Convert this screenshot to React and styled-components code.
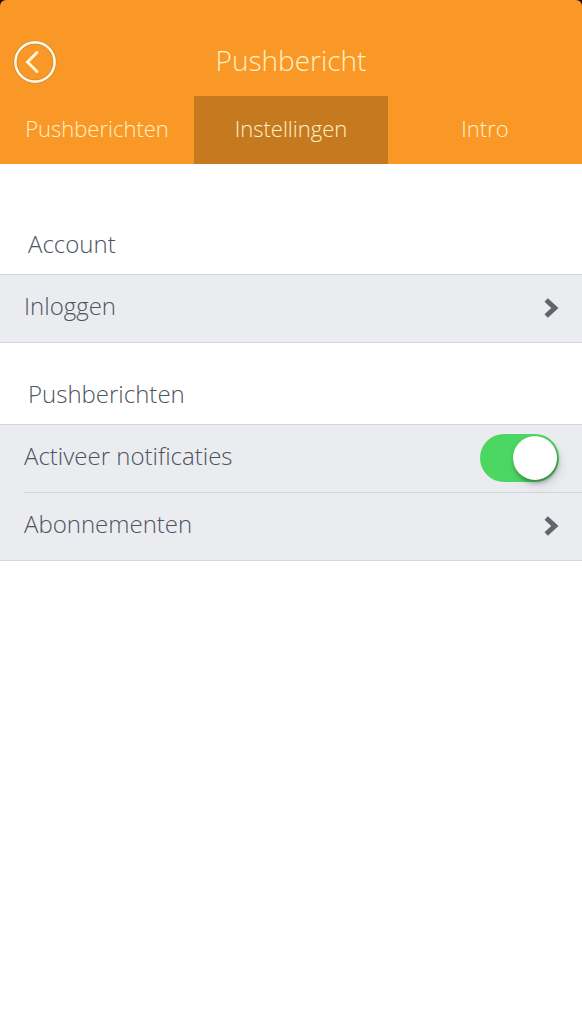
import React, { useState } from "react";
import styled, { createGlobalStyle } from "styled-components";

const GlobalStyle = createGlobalStyle`
  body {
    margin: 0;
    background: #fff;
    font-family: "Open Sans", "Noto Sans", sans-serif;
    font-weight: 330;
    font-variant-ligatures: none;
    color: #4d535f;
  }

  * {
    box-sizing: border-box;
  }
`;

const HeaderBackdrop = styled.div`
  background: #2a0800;
`;

const Header = styled.header`
  overflow: hidden;
  border-radius: 6px 6px 0 0;
  background: #fa9827;
  color: #fff0c8;
`;

const TitleBar = styled.div`
  display: grid;
  grid-template-columns: 44px 1fr 44px;
  align-items: center;
  height: 96px;
  padding: 28px 13px 0;
`;

const Title = styled.h1`
  margin: 0;
  padding-bottom: 4px;
  font-size: 28px;
  line-height: 36px;
  font-weight: inherit;
  text-align: center;
`;

const BackButton = styled.button`
  display: flex;
  width: 44px;
  height: 44px;
  padding: 0;
  border: 0;
  background: transparent;
`;

const Tabs = styled.nav`
  display: grid;
  grid-template-columns: repeat(3, 1fr);
`;

const Tab = styled.a`
  height: 68px;
  padding-top: 16px;
  background: ${(props) => (props.$active ? "#c67a1f" : "transparent")};
  color: #fff0c8;
  font-size: 22px;
  line-height: 32px;
  text-align: center;
  text-decoration: none;
`;

const Content = styled.main`
  padding-top: 29px;
`;

const SectionTitle = styled.h2`
  height: 81px;
  margin: 0;
  padding: 35px 28px 0;
  font-size: 24px;
  line-height: 32px;
  font-weight: inherit;
`;

const List = styled.div`
  border-top: 1px solid #d4d6da;
  border-bottom: 1px solid #d4d6da;
  background: #ebecf0;
`;

const rowStyles = `
  display: flex;
  align-items: center;
  justify-content: space-between;
  height: 67px;
  padding: 0 23px 2px 0;
  margin-left: 24px;
  color: inherit;
  font-size: 24px;
  line-height: 32px;
  text-decoration: none;
`;

const LinkRow = styled.a`
  ${rowStyles}
  ${(props) => props.$divided && "height: 68px; border-top: 1px solid #d4d6da;"}
`;

const SwitchRow = styled.label`
  ${rowStyles}
`;

const RowText = styled.span`
  padding-bottom: 4px;
`;

const Switch = styled.input`
  appearance: none;
  display: flex;
  align-items: center;
  width: 79px;
  height: 48px;
  margin: 0;
  padding: 0 2px;
  border-radius: 24px;
  background: ${(props) => (props.checked ? "#4cd763" : "#d4d6da")};

  &::before {
    content: "";
    width: 44px;
    height: 44px;
    margin-left: ${(props) => (props.checked ? "auto" : "0")};
    border-radius: 50%;
    background: #fff;
    box-shadow: 1px 3px 4px rgba(0, 0, 0, 0.3), 3px 6px 12px rgba(0, 0, 0, 0.1);
  }
`;

const BackIcon = () => (
  <svg width="44" height="44" viewBox="0 0 44 44" fill="none">
    <circle cx="22" cy="22" r="19.6" stroke="#c98735" strokeWidth="4" />
    <circle cx="22" cy="22" r="19.6" stroke="#fff6dc" strokeWidth="2.6" />
    <path
      d="M24 12.5L14.5 22L24 31.5"
      stroke="#fff6dc"
      strokeWidth="3"
      strokeLinecap="round"
    />
  </svg>
);

const Chevron = () => (
  <svg width="15" height="20" viewBox="0 0 15 20" fill="none">
    <path d="M2.2 2L10.8 10L2.2 18" stroke="#62656b" strokeWidth="5" />
  </svg>
);

const tabs = [
  { id: "messages", name: "Pushberichten" },
  { id: "settings", name: "Instellingen" },
  { id: "intro", name: "Intro" },
];

const App = () => {
  const [activeTab, setActiveTab] = useState("settings");
  const [enabled, setEnabled] = useState(true);

  return (
    <>
      <GlobalStyle />
      <HeaderBackdrop>
        <Header>
          <TitleBar>
            <BackButton type="button" aria-label="Terug">
              <BackIcon />
            </BackButton>
            <Title>Pushbericht</Title>
          </TitleBar>
          <Tabs>
            {tabs.map((tab) => (
              <Tab
                key={tab.id}
                href={`#${tab.id}`}
                $active={tab.id === activeTab}
                onClick={() => setActiveTab(tab.id)}
              >
                {tab.name}
              </Tab>
            ))}
          </Tabs>
        </Header>
      </HeaderBackdrop>
      <Content>
        <SectionTitle>Account</SectionTitle>
        <List>
          <LinkRow href="#login">
            <RowText>Inloggen</RowText>
            <Chevron />
          </LinkRow>
        </List>
        <SectionTitle>Pushberichten</SectionTitle>
        <List>
          <SwitchRow>
            <RowText>Activeer notificaties</RowText>
            <Switch
              type="checkbox"
              checked={enabled}
              onChange={() => setEnabled(!enabled)}
            />
          </SwitchRow>
          <LinkRow href="#subscriptions" $divided>
            <RowText>Abonnementen</RowText>
            <Chevron />
          </LinkRow>
        </List>
      </Content>
    </>
  );
};

export default App;
